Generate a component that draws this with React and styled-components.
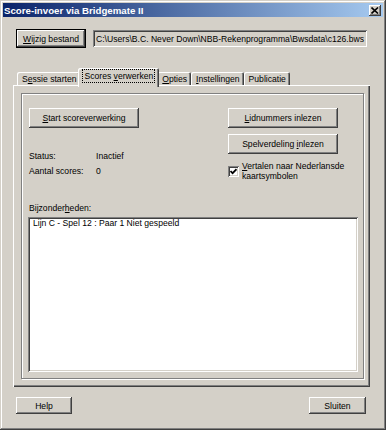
import React from 'react';
import styled, {createGlobalStyle, css} from 'styled-components';

const GlobalStyle = createGlobalStyle`
  html, body {
    margin: 0;
    padding: 0;
    background: #d4d0c8;
  }

  body {
    font-family: "Liberation Sans", Arial, sans-serif;
    font-size: 8.6px;
    color: #000;
  }
`

const raised = css`
  box-shadow: inset -1px -1px #404040, inset 1px 1px #fff,
  inset -2px -2px #808080, inset 2px 2px #d4d0c8;
`

const sunken = css`
  box-shadow: inset 1px 1px #808080, inset -1px -1px #fff,
  inset 2px 2px #404040, inset -2px -2px #d4d0c8;
`

const Window = styled.div`
  box-sizing: border-box;
  width: 386px;
  height: 430px;
  padding: 3px;
  display: flex;
  flex-direction: column;
  background: #d4d0c8;
  box-shadow: inset -1px -1px #404040, inset 1px 1px #d4d0c8,
  inset -2px -2px #808080, inset 2px 2px #fff;
`

const TitleBar = styled.div`
  height: 14px;
  display: flex;
  align-items: center;
  justify-content: space-between;
  padding: 0 2px 0 1px;
  background: linear-gradient(to right, #0a246a, #a6caf0);

  .title {
    color: #fff;
    font-weight: bold;
    font-size: 9.7px;
    white-space: nowrap;
  }
`

const CloseButton = styled.div`
  box-sizing: border-box;
  width: 12px;
  height: 11px;
  display: flex;
  align-items: center;
  justify-content: center;
  background: #d4d0c8;
  ${raised};
`

const FileRow = styled.div`
  display: flex;
  align-items: center;
  gap: 7px;
  margin: 12px 0 0 13px;
`

const Button = styled.div`
  box-sizing: border-box;
  width: ${p => p.$w}px;
  height: ${p => p.$h || 20}px;
  display: flex;
  align-items: center;
  justify-content: center;
  white-space: nowrap;
  background: #d4d0c8;
  ${raised};

  ${p => p.$default && css`
    border: 1px solid #000;
    box-shadow: inset -1px -1px #404040, inset 1px 1px #fff,
    inset -2px -2px #808080;
  `}
`

const PathBox = styled.div`
  box-sizing: border-box;
  width: 274px;
  height: 17px;
  padding: 0 3px;
  display: flex;
  align-items: center;
  overflow: hidden;
  white-space: nowrap;
  background: #d4d0c8;
  ${sunken};
`

const TabStrip = styled.div`
  display: flex;
  align-items: flex-end;
  margin: 20px 0 0 10px;
  padding-left: 4px;
  height: 17px;
`

const Tab = styled.div`
  box-sizing: border-box;
  height: 13px;
  padding: 0 4px 0 5px;
  display: flex;
  align-items: center;
  white-space: nowrap;
  background: #d4d0c8;
  border-top-left-radius: 2px;
  border-top-right-radius: 2px;
  box-shadow: inset 1px 1px #fff, inset -1px 0 #404040, inset -2px 0 #808080;

  ${p => p.$active && css`
    position: relative;
    z-index: 1;
    height: 19px;
    margin: 0 -2px -2px -2px;
    padding: 0 6px 3px 6px;

    span {
      outline: 1px dotted #000;
      outline-offset: 1px;
    }
  `}
`

const Panel = styled.div`
  box-sizing: border-box;
  width: 357px;
  height: 302px;
  margin-left: 10px;
  padding: 8px 6px 8px 8px;
  display: flex;
  box-shadow: inset 1px 1px #fff, inset -1px -1px #404040, inset -2px -2px #808080;
`

const Group = styled.div`
  flex: 1;
  display: flex;
  flex-direction: column;
  padding: 14px 5px 6px 6px;
  border: 1px solid #808080;
  box-shadow: inset 1px 1px #fff, 1px 1px #fff;
`

const Columns = styled.div`
  display: grid;
  grid-template-columns: 199px 110px;
  padding-left: 1px;
`

const Column = styled.div`
  display: flex;
  flex-direction: column;
  gap: ${p => p.$gap || 0}px;
`

const InfoList = styled.div`
  display: grid;
  grid-template-columns: 67px auto;
  line-height: 15px;
  margin-top: 21px;
`

const CheckRow = styled.label`
  display: flex;
  align-items: center;
  gap: 3px;
  margin-top: 1px;
  line-height: 10px;
  white-space: nowrap;
`

const CheckBox = styled.span`
  box-sizing: border-box;
  flex: none;
  width: 11px;
  height: 11px;
  display: flex;
  align-items: center;
  justify-content: center;
  background: #fff;
  ${sunken};
`

const Label = styled.div`
  margin-top: 20px;
  padding-left: 1px;
  line-height: 15px;
`

const TextArea = styled.div`
  flex: 1;
  margin-top: 1px;
  padding: 1px 5px;
  line-height: 11px;
  background: #fff;
  ${sunken};
`

const Footer = styled.div`
  display: flex;
  justify-content: space-between;
  margin: 10px 17px 0 13px;
`

const App = () => {
    return (
        <>
            <GlobalStyle/>
            <Window>
                <TitleBar>
                    <span className='title'>Score-invoer via Bridgemate II</span>
                    <CloseButton>
                        <svg width="8" height="7" viewBox="0 0 8 7">
                            <path d="M0.5 0.5 L7 6.5 M7 0.5 L0.5 6.5" stroke="#000" strokeWidth="1.6"/>
                        </svg>
                    </CloseButton>
                </TitleBar>

                <FileRow>
                    <Button $w={70} $h={19} $default><span><u>W</u>ijzig bestand</span></Button>
                    <PathBox>C:\Users\B.C. Never Down\NBB-Rekenprogramma\Bwsdata\c126.bws</PathBox>
                </FileRow>

                <TabStrip>
                    <Tab><span>S<u>e</u>ssie starten</span></Tab>
                    <Tab $active><span>Scores <u>v</u>erwerken</span></Tab>
                    <Tab><span><u>O</u>pties</span></Tab>
                    <Tab><span><u>I</u>nstellingen</span></Tab>
                    <Tab><span>Publicatie</span></Tab>
                </TabStrip>

                <Panel>
                    <Group>
                        <Columns>
                            <Column>
                                <Button $w={110}><span><u>S</u>tart scoreverwerking</span></Button>
                                <InfoList>
                                    <span>Status:</span>
                                    <span>Inactief</span>
                                    <span>Aantal scores:</span>
                                    <span>0</span>
                                </InfoList>
                            </Column>
                            <Column $gap={6}>
                                <Button $w={110}><span><u>L</u>idnummers inlezen</span></Button>
                                <Button $w={110}><span>Spelverdeling <u>i</u>nlezen</span></Button>
                                <CheckRow>
                                    <CheckBox>
                                        <svg width="7" height="7" viewBox="0 0 7 7">
                                            <path d="M0.5 3 L2.6 5.2 L6.5 1.2" fill="none" stroke="#000" strokeWidth="1.7"/>
                                        </svg>
                                    </CheckBox>
                                    <span><u>V</u>ertalen naar Nederlansde<br/>kaartsymbolen</span>
                                </CheckRow>
                            </Column>
                        </Columns>

                        <Label>Bijzonder<u>h</u>eden:</Label>
                        <TextArea>Lijn C - Spel 12 : Paar 1 Niet gespeeld</TextArea>
                    </Group>
                </Panel>

                <Footer>
                    <Button $w={56} $h={17}>Help</Button>
                    <Button $w={57} $h={17}>Sluiten</Button>
                </Footer>
            </Window>
        </>
    );
};

export default App;
